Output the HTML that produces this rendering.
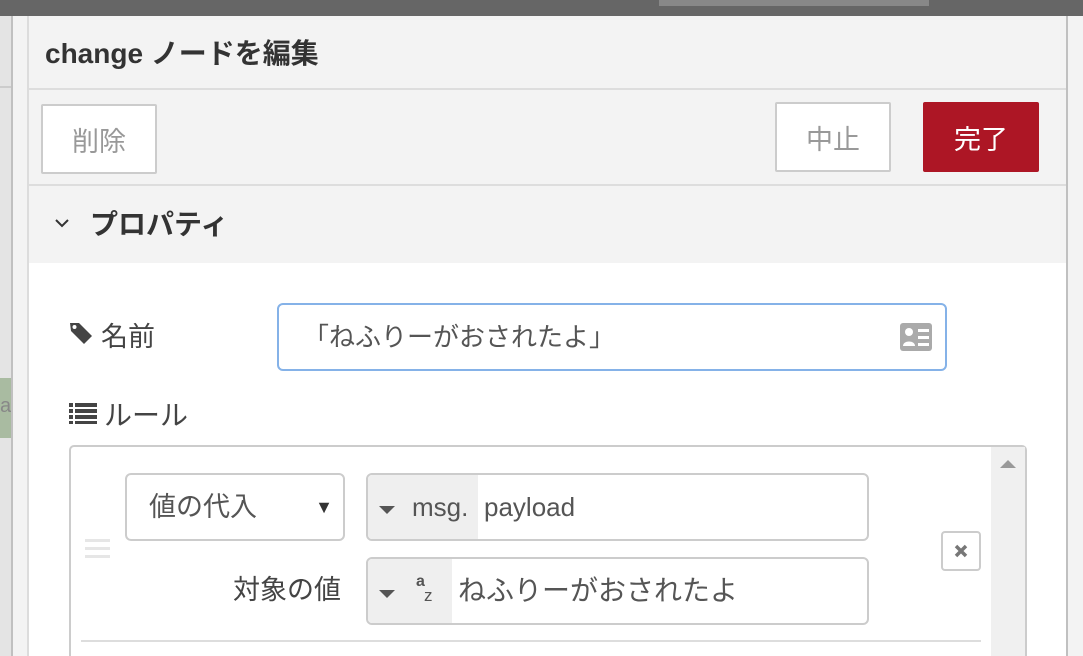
<!DOCTYPE html>
<html><head><meta charset="utf-8"><style>
*{box-sizing:border-box;margin:0;padding:0}
html,body{width:1083px;height:656px;overflow:hidden}
body{position:relative;background:#f3f3f3;font-family:"Liberation Sans","Noto Sans CJK JP",sans-serif;color:#444}
.abs{position:absolute}
.btn{position:absolute;background:#fff;border:2px solid #ccc;border-radius:2px;color:#999;font-size:27px;display:flex;align-items:center;justify-content:center}
.inp{position:absolute;border:2px solid #ccc;border-radius:6px;background:#fff;overflow:hidden}
</style></head><body>
<div class="abs" style="left:0;top:0;width:1083px;height:16px;background:#666"></div>
<div class="abs" style="left:659px;top:0;width:270px;height:6px;background:#888"></div>
<div class="abs" style="left:0;top:16px;width:11px;height:640px;background:#e4e4e4"></div>
<div class="abs" style="left:0;top:86px;width:11px;height:2px;background:#ccc"></div>
<div class="abs" style="left:0;top:378px;width:11px;height:60px;background:#a9bba1;color:#888;font-size:20px;line-height:56px">a</div>
<div class="abs" style="left:11px;top:16px;width:2px;height:640px;background:#c0c0c0"></div>
<div class="abs" style="left:27px;top:16px;width:2px;height:640px;background:#dcdcdc"></div>
<div class="abs" style="left:1066px;top:16px;width:2px;height:640px;background:#c0c0c0"></div>
<div class="abs" style="left:45px;top:32px;font-size:28px;font-weight:bold;color:#333">change ノードを編集</div>
<div class="abs" style="left:29px;top:88px;width:1037px;height:2px;background:#ddd"></div>
<div class="abs" style="left:29px;top:184px;width:1037px;height:2px;background:#ddd"></div>
<div class="btn" style="left:41px;top:104px;width:116px;height:70px">削除</div>
<div class="btn" style="left:775px;top:102px;width:116px;height:70px">中止</div>
<div class="btn" style="left:923px;top:102px;width:116px;height:70px;background:#ad1625;border-color:#ad1625;color:#fff">完了</div>
<svg class="abs" style="left:54px;top:217px" width="16" height="12"><path d="M2 3l6 6 6-6" stroke="#333" stroke-width="2" fill="none"/></svg>
<div class="abs" style="left:90px;top:203px;font-size:28px;font-weight:bold;color:#333">プロパティ</div>
<div class="abs" style="left:29px;top:263px;width:1037px;height:393px;background:#fff"></div>
<svg class="abs" style="left:69px;top:321px" width="25" height="25" viewBox="0 0 25 25"><path d="M1 2h9l13 13-8 8L2 10z" fill="#444"/><circle cx="5.5" cy="6" r="2" fill="#fff"/></svg>
<div class="abs" style="left:101px;top:315px;font-size:27px;color:#444">名前</div>
<div class="inp" style="left:277px;top:303px;width:670px;height:68px;border-color:#85b2e8;font-size:26px;line-height:64px;padding-left:24px;color:#555">「ねふりーがおされたよ」</div>
<svg class="abs" style="left:900px;top:323px" width="32" height="28" viewBox="0 0 32 28"><rect x="0" y="0" width="32" height="28" rx="3" fill="#aaa"/><circle cx="9" cy="9" r="4" fill="#fff"/><path d="M3 23c0-6 12-6 12 0z" fill="#fff"/><rect x="18" y="6" width="11" height="3" fill="#fff"/><rect x="18" y="13" width="11" height="3" fill="#fff"/><rect x="18" y="20" width="11" height="3" fill="#fff"/></svg>
<svg class="abs" style="left:69px;top:402px" width="28" height="22"><g fill="#444"><rect x="0" y="1" width="4" height="4"/><rect x="6" y="1" width="22" height="4"/><rect x="0" y="7" width="4" height="4"/><rect x="6" y="7" width="22" height="4"/><rect x="0" y="13" width="4" height="4"/><rect x="6" y="13" width="22" height="4"/><rect x="0" y="19" width="4" height="3"/><rect x="6" y="19" width="22" height="3"/></g></svg>
<div class="abs" style="left:104px;top:394px;font-size:28px;color:#444">ルール</div>
<div class="abs" style="left:69px;top:445px;width:958px;height:220px;border:2px solid #ccc;border-radius:5px;background:#fff"></div>
<div class="abs" style="left:991px;top:447px;width:34px;height:210px;background:#f0f0f0"></div>
<svg class="abs" style="left:998px;top:458px" width="20" height="12"><path d="M2 10L10 2 18 10z" fill="#999"/></svg>
<div class="abs" style="left:85px;top:539px;width:25px;height:3px;background:#e6e6e6;box-shadow:0 8px 0 #e6e6e6,0 16px 0 #e6e6e6"></div>
<div class="inp" style="left:125px;top:473px;width:220px;height:68px;font-size:27px;line-height:64px;padding-left:22px;color:#555">値の代入<span style="position:absolute;right:10px;font-size:18px;color:#333">▼</span></div>
<div class="inp" style="left:366px;top:473px;width:503px;height:68px;font-size:26px;line-height:64px;color:#555"><div class="abs" style="left:0;top:0;width:110px;height:66px;background:#efefef"></div><svg class="abs" style="left:10px;top:30px" width="18" height="10"><path d="M1 1h16L9 9z" fill="#555"/></svg><span class="abs" style="left:44px">msg.</span><span class="abs" style="left:116px">payload</span></div>
<div class="abs" style="left:233px;top:568px;font-size:27px;color:#444">対象の値</div>
<div class="inp" style="left:366px;top:557px;width:503px;height:68px;font-size:28px;line-height:64px;color:#555"><div class="abs" style="left:0;top:0;width:84px;height:66px;background:#efefef"></div><svg class="abs" style="left:10px;top:30px" width="18" height="10"><path d="M1 1h16L9 9z" fill="#555"/></svg><span class="abs" style="left:48px;top:-9px;font-size:16px;font-weight:bold">a</span><span class="abs" style="left:56px;top:5px;font-size:17px">z</span><span class="abs" style="left:90px">ねふりーがおされたよ</span></div>
<div class="btn" style="left:941px;top:531px;width:40px;height:40px;border-radius:4px"><svg width="16" height="16"><path d="M3 3l10 10M13 3L3 13" stroke="#777" stroke-width="3.5"/></svg></div>
<div class="abs" style="left:81px;top:640px;width:900px;height:2px;background:#ddd"></div>
</body></html>
